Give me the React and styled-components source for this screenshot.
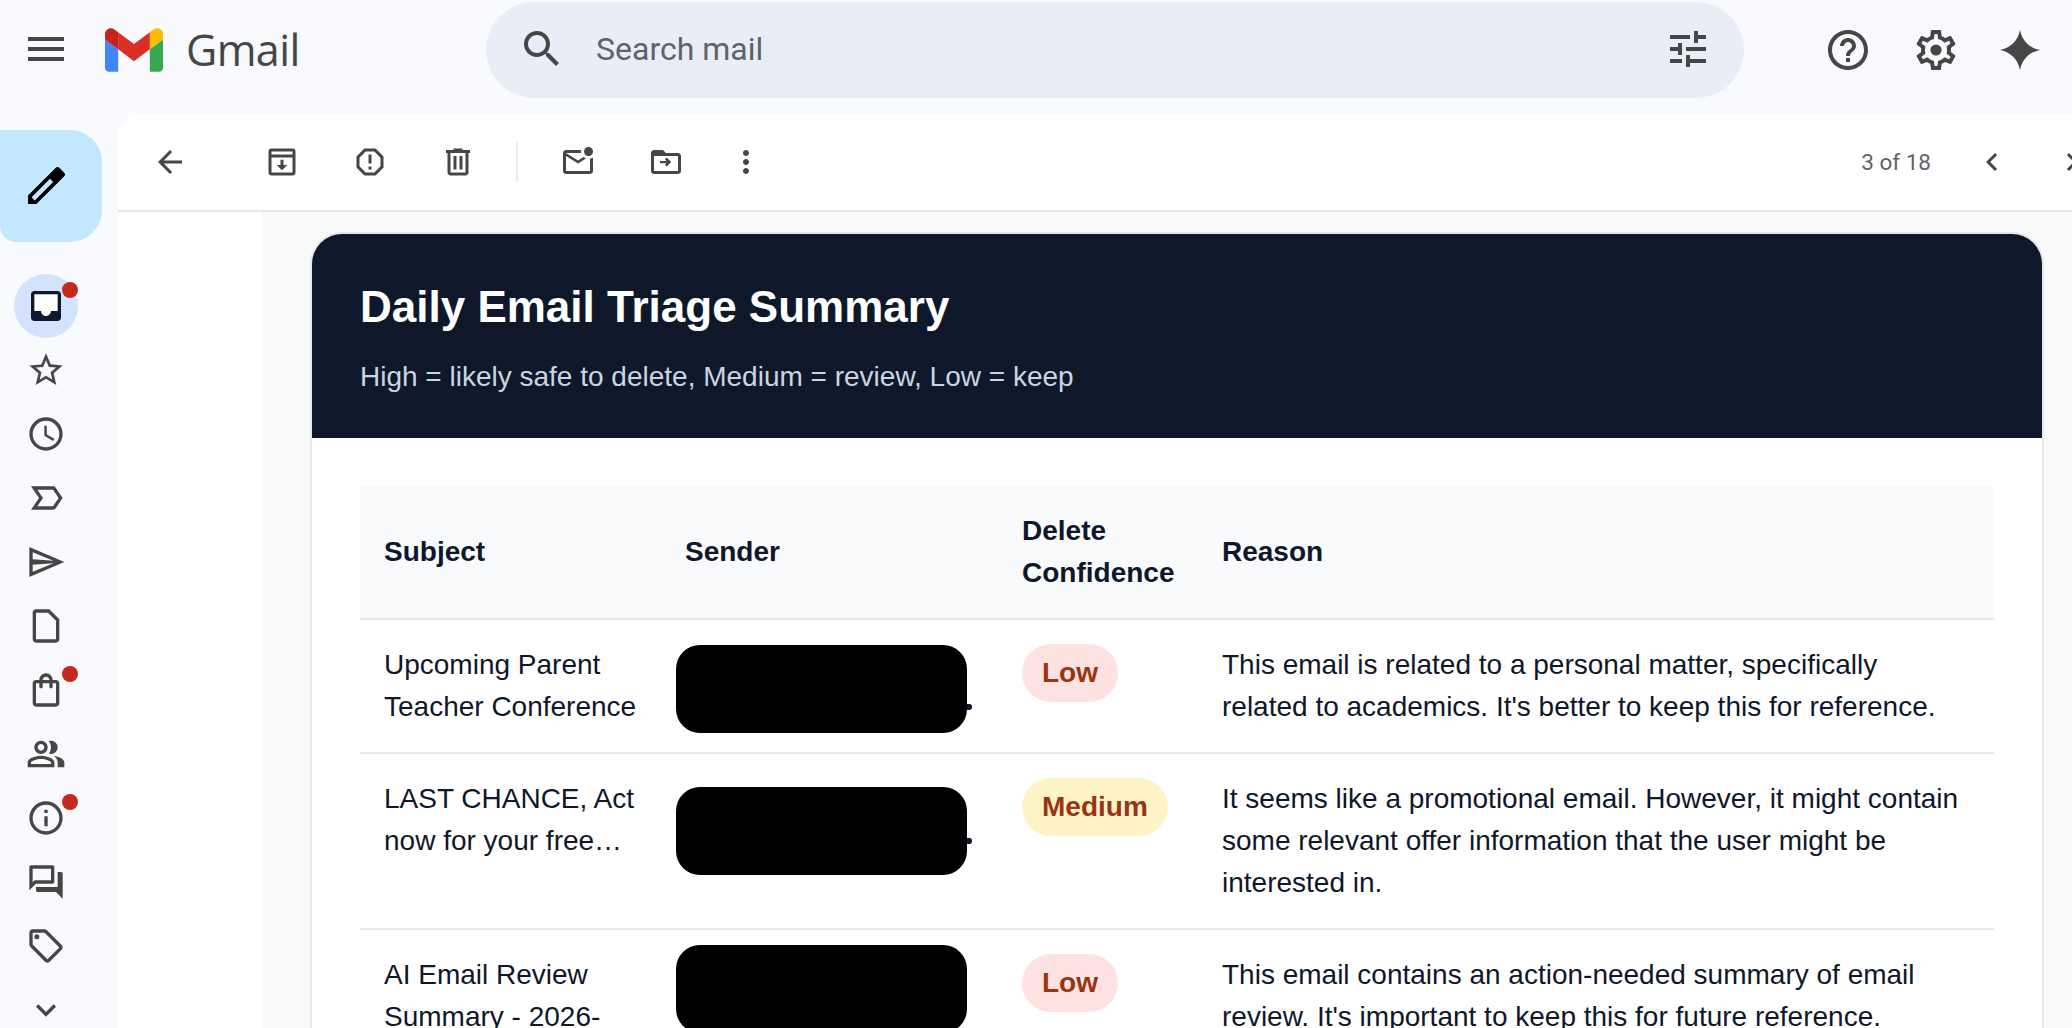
import React from "react";
import styled, { createGlobalStyle } from "styled-components";

const Global = createGlobalStyle`
  html, body { margin: 0; padding: 0; height: 100%; overflow: hidden; background: #f8fafd; }
  * { box-sizing: border-box; }
`;

const P = {
  menu: "M3 18h18v-2H3v2zm0-5h18v-2H3v2zm0-7v2h18V6H3z",
  search: "M15.5 14h-.79l-.28-.27C15.41 12.59 16 11.11 16 9.5 16 5.91 13.09 3 9.5 3S3 5.91 3 9.5 5.91 16 9.5 16c1.61 0 3.09-.59 4.23-1.57l.27.28v.79l5 4.99L20.49 19l-4.99-5zm-6 0C7.01 14 5 11.99 5 9.5S7.01 5 9.5 5 14 7.01 14 9.5 11.99 14 9.5 14z",
  tune: "M3 17v2h6v-2H3zM3 5v2h10V5H3zm10 16v-2h8v-2h-8v-2h-2v6h2zM7 9v2H3v2h4v2h2V9H7zm14 4v-2H11v2h10zm-6-4h2V7h4V5h-4V3h-2v6z",
  help: "M11 18h2v-2h-2v2zm1-16C6.48 2 2 6.48 2 12s4.48 10 10 10 10-4.48 10-10S17.52 2 12 2zm0 18c-4.41 0-8-3.59-8-8s3.59-8 8-8 8 3.59 8 8-3.59 8-8 8zm0-14c-2.21 0-4 1.79-4 4h2c0-1.1.9-2 2-2s2 .9 2 2c0 2-3 1.75-3 5h2c0-2.25 3-2.5 3-5 0-2.21-1.79-4-4-4z",
  gear: "M19.43 12.98c.04-.32.07-.64.07-.98 0-.34-.03-.66-.07-.98l2.11-1.65c.19-.15.24-.42.12-.64l-2-3.46c-.09-.16-.26-.25-.44-.25-.06 0-.12.01-.17.03l-2.49 1c-.52-.4-1.08-.73-1.69-.98l-.38-2.65C14.46 2.18 14.25 2 14 2h-4c-.25 0-.46.18-.49.42l-.38 2.65c-.61.25-1.17.59-1.69.98l-2.49-1c-.06-.02-.12-.03-.18-.03-.17 0-.34.09-.43.25l-2 3.46c-.13.22-.07.49.12.64l2.11 1.65c-.04.32-.07.65-.07.98 0 .33.03.66.07.98l-2.11 1.65c-.19.15-.24.42-.12.64l2 3.46c.09.16.26.25.44.25.06 0 .12-.01.17-.03l2.49-1c.52.4 1.08.73 1.69.98l.38 2.65c.03.24.24.42.49.42h4c.25 0 .46-.18.49-.42l.38-2.65c.61-.25 1.17-.59 1.69-.98l2.49 1c.06.02.12.03.18.03.17 0 .34-.09.43-.25l2-3.46c.12-.22.07-.49-.12-.64l-2.11-1.65zm-1.98-1.71c.04.31.05.52.05.73 0 .21-.02.43-.05.73l-.14 1.13.89.7 1.08.84-.7 1.21-1.27-.51-1.04-.42-.9.68c-.43.32-.84.56-1.25.73l-1.06.43-.16 1.13-.2 1.35h-1.4l-.19-1.35-.16-1.13-1.06-.43c-.43-.18-.83-.41-1.23-.71l-.91-.7-1.06.43-1.27.51-.7-1.21 1.08-.84.89-.7-.14-1.13c-.03-.31-.05-.54-.05-.74s.02-.43.05-.73l.14-1.13-.89-.7-1.08-.84.7-1.21 1.27.51 1.04.42.9-.68c.43-.32.84-.56 1.25-.73l1.06-.43.16-1.13.2-1.35h1.39l.19 1.35.16 1.13 1.06.43c.43.18.83.41 1.23.71l.91.7 1.06-.43 1.27-.51.7 1.21-1.07.85-.89.7.14 1.13zM12 9.2a2.8 2.8 0 1 0 0 5.6 2.8 2.8 0 0 0 0-5.6z",
  spark: "M12 2C13 7.300 16.700 11 22 12 16.700 13 13 16.700 12 22 11 16.700 7.300 13 2 12 7.300 11 11 7.300 12 2z",
  back: "M20 11H7.83l5.59-5.59L12 4l-8 8 8 8 1.41-1.41L7.83 13H20v-2z",
  archive: "M5 3h14a2 2 0 0 1 2 2v14a2 2 0 0 1-2 2H5a2 2 0 0 1-2-2V5a2 2 0 0 1 2-2zm0 2v2h14V5H5zm0 4v10h14V9H5zm6 1.500h2V14h2.500L12 17.500 8.500 14H11v-3.500z",
  report: "M15.73 3H8.27L3 8.27v7.46L8.27 21h7.46L21 15.73V8.27L15.73 3zM19 14.9L14.9 19H9.1L5 14.9V9.1L9.1 5h5.8L19 9.1v5.8zM11 7h2v6h-2zM11 15h2v2h-2z",
  trash: "M15 4V3H9v1H4v2h1v13c0 1.1.9 2 2 2h10c1.1 0 2-.9 2-2V6h1V4h-5zm2 15H7V6h10v13zM9 8h2v9H9zm4 0h2v9h-2z",
  unread: "M22 8.98V18c0 1.1-.9 2-2 2H4c-1.1 0-2-.9-2-2V6c0-1.1.9-2 2-2h10.1c-.06.32-.1.66-.1 1 0 .34.04.68.1 1H4l8 5 3.67-2.29c.47.43 1.02.76 1.63.98L12 13 4 8v10h16V9.9c.74-.15 1.42-.48 2-.92zM16 5c0 1.66 1.34 3 3 3s3-1.34 3-3-1.34-3-3-3-3 1.34-3 3z",
  move: "M20 6h-8l-2-2H4c-1.1 0-1.99.9-1.99 2L2 18c0 1.1.9 2 2 2h16c1.1 0 2-.9 2-2V8c0-1.1-.9-2-2-2zm0 12H4V8h16v10zM12.500 9l-1.200 1.200 1.050 1.050H8v1.500h4.350l-1.050 1.050L12.500 15l3-3z",
  more: "M12 8c1.1 0 2-.9 2-2s-.9-2-2-2-2 .9-2 2 .9 2 2 2zm0 2c-1.1 0-2 .9-2 2s.9 2 2 2 2-.9 2-2-.9-2-2-2zm0 6c-1.1 0-2 .9-2 2s.9 2 2 2 2-.9 2-2-.9-2-2-2z",
  left: "M15.41 7.41L14 6l-6 6 6 6 1.41-1.41L10.83 12z",
  right: "M10 6L8.59 7.41 13.17 12l-4.58 4.59L10 18l6-6z",
  pencil: "M3 21v-4.200L16.800 3a1.400 1.400 0 0 1 2 0L21 5.200a1.400 1.400 0 0 1 0 2L7.200 21H3zM4.800 17.600L6.400 19.200 15.600 10 14 8.400 4.800 17.600z",
  inbox: "M19 3H5c-1.1 0-2 .9-2 2v14c0 1.1.9 2 2 2h14c1.1 0 2-.9 2-2V5c0-1.1-.9-2-2-2zm0 12h-4c0 1.66-1.35 3-3 3s-3-1.34-3-3H5V5h14v10z",
  inboxHole: "M5 5h14v10h-4c0 1.660-1.350 3-3 3s-3-1.340-3-3H5V5z",
  star: "M22 9.24l-7.19-.62L12 2 9.19 8.63 2 9.24l5.46 4.73L5.82 21 12 17.27 18.18 21l-1.63-7.03L22 9.24zM12 15.4l-3.76 2.27 1-4.28-3.32-2.88 4.38-.38L12 6.1l1.71 4.04 4.38.38-3.32 2.88 1 4.28L12 15.4z",
  clock: "M11.99 2C6.47 2 2 6.48 2 12s4.47 10 9.99 10C17.52 22 22 17.52 22 12S17.52 2 11.99 2zM12 20c-4.42 0-8-3.58-8-8s3.58-8 8-8 8 3.58 8 8-3.58 8-8 8zm.5-13H11v6l5.25 3.15.75-1.23-4.5-2.67z",
  important: "M3 5h13.2c.65 0 1.26.31 1.63.84L22 12l-4.17 6.16c-.37.52-.98.84-1.63.84H3l4.800-7L3 5zm3.800 2l3.400 5-3.400 5h9.400l3.400-5-3.400-5H6.800z",
  send: "M2 3l21 9-21 9V3zm2 3.100v4.200l12.500 1L4 6.100zm0 7.600v4.200l12.500-5.200L4 13.700z",
  draft: "M6 2h8l6 6v12c0 1.100-.9 2-2 2H6c-1.100 0-2-.9-2-2V4c0-1.100.9-2 2-2zm0 2v16h12V8.800L13.200 4H6z",
  bag: "M18 6h-2c0-2.21-1.79-4-4-4S8 3.79 8 6H6c-1.1 0-2 .9-2 2v12c0 1.1.9 2 2 2h12c1.1 0 2-.9 2-2V8c0-1.1-.9-2-2-2zm-6-2c1.1 0 2 .9 2 2h-4c0-1.1.9-2 2-2zm6 16H6V8h2v2c0 .55.45 1 1 1s1-.45 1-1V8h4v2c0 .55.45 1 1 1s1-.45 1-1V8h2v12z",
  people: "M16.67 13.13C18.04 14.06 19 15.32 19 17v3h4v-3c0-2.18-3.57-3.47-6.33-3.87zM15 12c2.21 0 4-1.79 4-4s-1.79-4-4-4c-.47 0-.91.1-1.33.24C14.5 5.27 15 6.58 15 8s-.5 2.73-1.33 3.76c.42.14.86.24 1.33.24zM9 12c2.21 0 4-1.79 4-4s-1.79-4-4-4-4 1.79-4 4 1.79 4 4 4zm0-6c1.1 0 2 .9 2 2s-.9 2-2 2-2-.9-2-2 .9-2 2-2zM9 13c-2.67 0-8 1.34-8 4v3h16v-3c0-2.66-5.33-4-8-4zm6 5H3v-.99C3.2 16.29 6.3 15 9 15s5.8 1.29 6 2v1z",
  info: "M11 7h2v2h-2zm0 4h2v6h-2zm1-9C6.48 2 2 6.48 2 12s4.48 10 10 10 10-4.48 10-10S17.52 2 12 2zm0 18c-4.41 0-8-3.59-8-8s3.59-8 8-8 8 3.59 8 8-3.59 8-8 8z",
  forum: "M15 4v7H5.17L4 12.17V4h11m1-2H3c-.55 0-1 .45-1 1v14l4-4h10c.55 0 1-.45 1-1V3c0-.55-.45-1-1-1zm5 4h-2v9H6v2c0 .55.45 1 1 1h11l4 4V7c0-.55-.45-1-1-1z",
  tag: "M21.41 11.41l-8.83-8.83C12.21 2.21 11.7 2 11.17 2H4c-1.1 0-2 .9-2 2v7.17c0 .53.21 1.04.59 1.41l8.83 8.83c.78.78 2.05.78 2.83 0l7.17-7.17c.78-.78.78-2.04-.01-2.83zM12.83 20L4 11.17V4h7.17L20 12.83 12.83 20zM6.500 5a1.500 1.500 0 1 0 0 3 1.500 1.500 0 0 0 0-3z",
  down: "M16.59 8.59L12 13.17 7.41 8.59 6 10l6 6 6-6z",
};

const Svg = styled.svg`
  display: block;
  flex: none;
  fill: ${(p) => p.$color || "#444746"};
`;
const Icon = ({ d, size = 48, color, hole }) => (
  <Svg $color={color} width={size} height={size} viewBox="0 0 24 24" fillRule="evenodd">
    {hole && <path d={hole} fill="#fff" />}
    <path d={d} />
  </Svg>
);

const Page = styled.div`
  width: 2072px;
  height: 1028px;
  display: flex;
  flex-direction: column;
  overflow: hidden;
  background: #f8fafd;
  font-family: "Liberation Sans", Arial, sans-serif;
`;

/* top bar */
const TopBar = styled.header`
  height: 114px;
  flex: none;
  display: flex;
  align-items: flex-start;
`;
const MenuSlot = styled.div`
  width: 105px;
  height: 98px;
  flex: none;
  display: flex;
  align-items: center;
  padding-left: 22px;
`;
const Brand = styled.div`
  width: 381px;
  height: 100px;
  flex: none;
  display: flex;
  align-items: center;
  gap: 23px;
`;
const BrandName = styled.span`
  font-family: "Open Sans", sans-serif;
  font-size: 43px;
  line-height: 48px;
  color: #444746;
  letter-spacing: -0.6px;
`;
const SearchBar = styled.div`
  width: 1258px;
  height: 96px;
  margin-top: 2px;
  flex: none;
  display: flex;
  align-items: center;
  border-radius: 48px;
  background: #e9eef6;
  padding: 0 32px 2px 32px;
`;
const SearchText = styled.span`
  flex: 1;
  margin-left: 30px;
  font-family: Roboto, sans-serif;
  font-size: 32px;
  color: #5f6368;
`;
const TopActions = styled.div`
  height: 100px;
  flex: 1;
  display: flex;
  align-items: center;
  padding-left: 80px;
  gap: 40px;
`;
const SparkSlot = styled.span`
  display: block;
  margin-left: -4px;
`;

/* body */
const Body = styled.div`
  flex: 1;
  min-height: 0;
  display: flex;
`;
const Sidebar = styled.nav`
  width: 118px;
  flex: none;
  display: flex;
  flex-direction: column;
  padding-top: 16px;
`;
const Compose = styled.div`
  width: 102px;
  height: 112px;
  flex: none;
  display: flex;
  align-items: center;
  justify-content: center;
  padding-right: 10px;
  margin-bottom: 32px;
  border-radius: 0 32px 32px 16px;
  background: #c2e7ff;
`;
const NavRow = styled.div`
  position: relative;
  width: 92px;
  height: 64px;
  flex: none;
  display: flex;
  align-items: center;
  justify-content: center;
`;
const NavBubble = styled.span`
  width: 64px;
  height: 64px;
  display: flex;
  align-items: center;
  justify-content: center;
  border-radius: 50%;
  background: ${(p) => (p.$active ? "#d3e3fd" : "transparent")};
`;
const Dot = styled.span`
  position: absolute;
  left: 62px;
  top: 8px;
  width: 16px;
  height: 16px;
  border-radius: 50%;
  background: #c5291c;
`;

const Panel = styled.main`
  flex: 1;
  min-width: 0;
  display: flex;
  flex-direction: column;
  overflow: hidden;
  background: #fff;
  border-radius: 24px 0 0 0;
`;
const Toolbar = styled.div`
  height: 96px;
  flex: none;
  display: flex;
  align-items: center;
  padding: 0 0 0 8px;
  margin-right: -40px;
`;
const ToolButton = styled.div`
  width: ${(p) => p.$w || 88}px;
  height: 72px;
  flex: none;
  display: flex;
  align-items: center;
  justify-content: center;
`;
const ToolDivider = styled.div`
  width: 2px;
  height: 40px;
  flex: none;
  margin: 0 16px 0 14px;
  background: #e9edf2;
`;
const ToolSpacer = styled.div`
  width: 24px;
  flex: none;
`;
const Pager = styled.span`
  margin-left: auto;
  margin-right: 21px;
  font-family: Roboto, sans-serif;
  font-size: 22.5px;
  color: #5f6368;
`;

const Content = styled.div`
  flex: 1;
  min-height: 0;
  display: flex;
  border-top: 2px solid #e6e8ec;
`;
const Gutter = styled.div`
  width: 144px;
  flex: none;
  background: #fff;
`;
const MailArea = styled.div`
  flex: 1;
  min-width: 0;
  padding: 20px 28px 0 48px;
  background: #f8f9fb;
`;
const Card = styled.article`
  border: 2px solid #e5e7eb;
  border-bottom: 0;
  border-radius: 32px 32px 0 0;
  background: #fff;
  overflow: hidden;
  height: 900px;
`;
const CardHead = styled.div`
  height: 204px;
  padding: 45px 48px 0;
  background: #0f172a;
`;
const Title = styled.h1`
  margin: 0;
  font-size: 44px;
  line-height: 56px;
  font-weight: 700;
  color: #fff;
`;
const Subtitle = styled.p`
  margin: 21px 0 0;
  font-size: 28px;
  line-height: 42px;
  color: #cbd5e1;
`;
const CardBody = styled.div`
  padding: 48px 48px 0;
`;
const Table = styled.table`
  width: 1634px;
  table-layout: fixed;
  border-collapse: collapse;
  font-size: 28px;
  line-height: 42px;
  color: #0f172a;
`;
const Th = styled.th`
  width: ${(p) => p.$w}px;
  padding: 24px;
  text-align: left;
  font-weight: 700;
  background: #f8fafc;
  border-bottom: 2px solid #e5e7eb;
`;
const Td = styled.td`
  padding: 24px;
  vertical-align: top;
  border-bottom: 2px solid #e5e7eb;
`;
const Badge = styled.span`
  display: inline-block;
  padding: 8px 20px;
  border-radius: 29px;
  font-weight: 700;
  color: #9a3412;
  background: ${(p) => (p.$level === "Medium" ? "#fef3c7" : "#fee2e2")};
`;
const Redacted = styled.div`
  position: relative;
  width: 291px;
  height: 88px;
  margin: ${(p) => p.$top}px 0 -88px -9px;
  border-radius: 24px;
  background: #000;
  &::after {
    content: "";
    position: ${(p) => (p.$nub ? "absolute" : "static")};
    display: ${(p) => (p.$nub ? "block" : "none")};
    left: 291px;
    top: ${(p) => p.$nub}px;
    width: 5px;
    height: 6px;
    border-radius: 0 50% 50% 0;
    background: #0f172a;
  }
`;

const rows = [
  { subject: "Upcoming Parent Teacher Conference", top: 1, nub: 59, level: "Low",
    reason: "This email is related to a personal matter, specifically related to academics. It's better to keep this for reference." },
  { subject: "LAST CHANCE, Act now for your free…", top: 9, nub: 51, level: "Medium",
    reason: "It seems like a promotional email. However, it might contain some relevant offer information that the user might be interested in." },
  { subject: "AI Email Review Summary - 2026-", top: -9, level: "Low",
    reason: "This email contains an action-needed summary of email review. It's important to keep this for future reference." },
];

const nav = [
  { d: P.inbox, hole: P.inboxHole, active: true, dot: true, color: "#0f172a" },
  { d: P.star }, { d: P.clock }, { d: P.important }, { d: P.send }, { d: P.draft },
  { d: P.bag, dot: true }, { d: P.people }, { d: P.info, dot: true }, { d: P.forum }, { d: P.tag }, { d: P.down },
];

const GmailLogo = () => (
  <svg width="58" height="44" viewBox="52 42 88 66">
    <path fill="#4285f4" d="M58 108h14V74L52 59v43c0 3.32 2.69 6 6 6" />
    <path fill="#34a853" d="M120 108h14c3.32 0 6-2.69 6-6V59l-20 15" />
    <path fill="#fbbc04" d="M120 48v26l20-15v-8c0-7.42-8.47-11.65-14.4-7.2" />
    <path fill="#d93025" d="M72 74V48l24 18 24-18v26L96 92" />
    <path fill="#c5221f" d="M52 51v8l20 15V48l-5.6-4.2c-5.94-4.45-14.4-.22-14.4 7.2" />
  </svg>
);

export default function App() {
  return (
    <Page>
      <Global />
      <TopBar>
        <MenuSlot><Icon d={P.menu} /></MenuSlot>
        <Brand>
          <GmailLogo />
          <BrandName>Gmail</BrandName>
        </Brand>
        <SearchBar>
          <Icon d={P.search} />
          <SearchText>Search mail</SearchText>
          <Icon d={P.tune} />
        </SearchBar>
        <TopActions>
          <Icon d={P.help} />
          <Icon d={P.gear} />
          <SparkSlot><Icon d={P.spark} /></SparkSlot>
        </TopActions>
      </TopBar>
      <Body>
        <Sidebar>
          <Compose><Icon d={P.pencil} size={48} color="#000" /></Compose>
          {nav.map((n, i) => (
            <NavRow key={i}>
              <NavBubble $active={n.active}>
                <Icon d={n.d} hole={n.hole} size={40} color={n.color} />
              </NavBubble>
              {n.dot && <Dot />}
            </NavRow>
          ))}
        </Sidebar>
        <Panel>
          <Toolbar>
            <ToolButton><Icon d={P.back} size={36} /></ToolButton>
            <ToolSpacer />
            <ToolButton><Icon d={P.archive} size={36} /></ToolButton>
            <ToolButton><Icon d={P.report} size={36} /></ToolButton>
            <ToolButton><Icon d={P.trash} size={36} /></ToolButton>
            <ToolDivider />
            <ToolButton><Icon d={P.unread} size={36} /></ToolButton>
            <ToolButton><Icon d={P.move} size={36} /></ToolButton>
            <ToolButton $w={72}><Icon d={P.more} size={36} /></ToolButton>
            <Pager>3 of 18</Pager>
            <ToolButton $w={80}><Icon d={P.left} size={36} /></ToolButton>
            <ToolButton $w={80}><Icon d={P.right} size={36} /></ToolButton>
          </Toolbar>
          <Content>
            <Gutter />
            <MailArea>
              <Card>
                <CardHead>
                  <Title>Daily Email Triage Summary</Title>
                  <Subtitle>High = likely safe to delete, Medium = review, Low = keep</Subtitle>
                </CardHead>
                <CardBody>
                  <Table>
                    <thead>
                      <tr>
                        <Th $w={301}>Subject</Th>
                        <Th $w={337}>Sender</Th>
                        <Th $w={200}>Delete Confidence</Th>
                        <Th $w={796}>Reason</Th>
                      </tr>
                    </thead>
                    <tbody>
                      {rows.map((r) => (
                        <tr key={r.subject}>
                          <Td>{r.subject}</Td>
                          <Td><Redacted $top={r.top} $nub={r.nub} /></Td>
                          <Td><Badge $level={r.level}>{r.level}</Badge></Td>
                          <Td>{r.reason}</Td>
                        </tr>
                      ))}
                    </tbody>
                  </Table>
                </CardBody>
              </Card>
            </MailArea>
          </Content>
        </Panel>
      </Body>
    </Page>
  );
}
